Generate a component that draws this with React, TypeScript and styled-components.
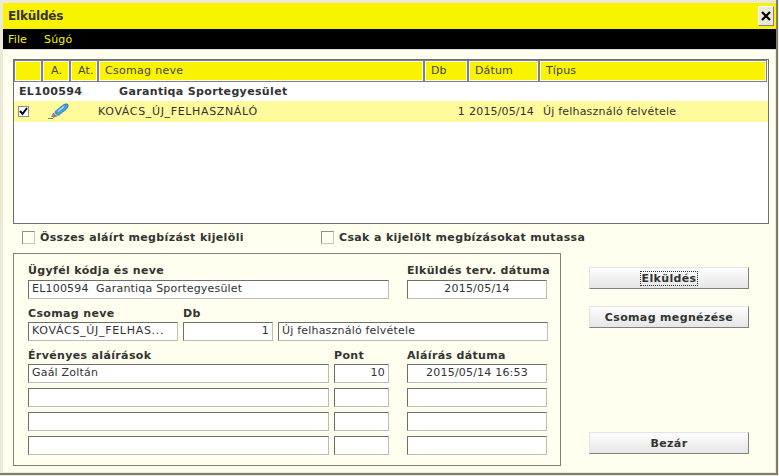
import React from 'react';
import styled, { createGlobalStyle } from 'styled-components';

const GlobalStyle = createGlobalStyle`
	html, body {
		margin: 0;
		padding: 0;
		background: #fffeef;
	}
`;

const Window = styled.div`
	box-sizing: border-box;
	width: 779px;
	height: 476px;
	padding: 3px;
	display: flex;
	flex-direction: column;
	background: #ece9d8;
	box-shadow: inset -1px -1px 0 #ece9d8, inset -3px -3px 0 #7d7d72;
	font-family: 'DejaVu Sans', Verdana, sans-serif;
	font-size: 11px;
	letter-spacing: 0.15px;
	color: #2b2b2b;
`;

const TitleBar = styled.div`
	height: 26px;
	flex: none;
	display: flex;
	align-items: center;
	justify-content: space-between;
	padding: 0 2px 0 5px;
	background: #f9f300;
`;

const Title = styled.span`
	font-size: 12px;
	font-weight: bold;
	letter-spacing: -0.2px;
	color: #333;
`;

const CloseButton = styled.button`
	box-sizing: border-box;
	width: 16px;
	height: 20px;
	padding: 0;
	display: flex;
	align-items: center;
	justify-content: center;
	background: #ece9d8;
	border: 1px solid;
	border-color: #fff #808076 #808076 #fff;
`;

const MenuBar = styled.div`
	height: 20px;
	flex: none;
	display: flex;
	align-items: center;
	gap: 17px;
	padding: 0 5px;
	background: #000;
	color: #f9f300;
	border-bottom: 1px solid #ddd;
`;

const Content = styled.div`
	flex: 1;
	display: flex;
	flex-direction: column;
	padding: 9px 6px 6px 10px;
	background: #fffeef;
	border-right: 1px solid #ece9d8;
	border-bottom: 1px solid #ece9d8;
`;

const ListBox = styled.div`
	box-sizing: border-box;
	height: 165px;
	flex: none;
	background: #fff;
	border: 1px solid #70706c;
`;

const HeaderRow = styled.div`
	display: grid;
	grid-template-columns: 26px 26px 26px 324px 42px 69px 226px;
	gap: 2px;
	padding: 1px 1px 0;
`;

const HeaderCell = styled.div<{ $pad?: number; $spread?: number }>`
	box-sizing: border-box;
	height: 20px;
	line-height: 18px;
	padding-left: ${(p) => p.$pad ?? 5}px;
	letter-spacing: ${(p) => p.$spread ?? 0.15}px;
	background: #f9f300;
	border: 1px solid #fff;
	outline: 1px solid #808080;
	color: #444;
`;

const GroupRow = styled.div`
	height: 20px;
	display: flex;
	align-items: center;
	font-weight: bold;
	letter-spacing: 0.35px;
	color: #333;
`;

const GroupCode = styled.span`
	width: 100px;
	padding-left: 5px;
	flex: none;
`;

const ItemRow = styled.div`
	height: 21px;
	display: flex;
	align-items: center;
	background: #fffa9c;
	color: #333;
`;

const RowCheck = styled.div`
	box-sizing: border-box;
	width: 11px;
	height: 11px;
	margin-left: 4px;
	flex: none;
	display: flex;
	align-items: center;
	justify-content: center;
	background: #fff;
	border: 1px solid #8a8f9c;
`;

const PenSlot = styled.div`
	width: 27px;
	margin-left: 17px;
	flex: none;
	display: flex;
`;

const ItemName = styled.span`
	width: 343px;
	margin-left: 25px;
	flex: none;
	letter-spacing: 0.65px;
`;

const ItemCount = styled.span`
	width: 24px;
	text-align: right;
	flex: none;
`;

const ItemDate = styled.span`
	width: 69px;
	text-align: right;
	flex: none;
`;

const ItemType = styled.span`
	margin-left: 9px;
	letter-spacing: 0.2px;
`;

const OptionsRow = styled.div`
	height: 29px;
	flex: none;
	display: flex;
	align-items: center;
	font-weight: bold;
	letter-spacing: 0.35px;
	color: #333;
	padding: 0 0 2px 9px;
	box-sizing: border-box;
`;

const Option = styled.label<{ $width: number }>`
	display: flex;
	align-items: center;
	gap: 5px;
	width: ${(p) => p.$width}px;
`;

const EmptyBox = styled.span`
	box-sizing: border-box;
	width: 13px;
	height: 13px;
	background: #fffeef;
	border: 1px solid;
	border-color: #8f8f8f #c4c4c4 #c4c4c4 #8f8f8f;
`;

const Lower = styled.div`
	flex: 1;
	display: flex;
	gap: 28px;
`;

const FormPanel = styled.div`
	box-sizing: border-box;
	width: 548px;
	height: 213px;
	padding: 10px 12px 0 14px;
	border: 1px solid #808076;
	display: flex;
	flex-direction: column;
`;

const FormRow = styled.div<{ $cols: string; $gap?: number; $after?: number }>`
	display: grid;
	grid-template-columns: ${(p) => p.$cols};
	column-gap: ${(p) => p.$gap ?? 5}px;
	margin-bottom: ${(p) => p.$after ?? 0}px;
`;

const FieldLabel = styled.div<{ $indent?: number; $low?: boolean }>`
	height: 16px;
	line-height: ${(p) => (p.$low ? 16 : 14)}px;
	margin-left: ${(p) => p.$indent ?? 0}px;
	font-weight: bold;
	letter-spacing: 0.35px;
	color: #333;
	white-space: nowrap;
`;

const Field = styled.div<{ $align?: string; $caps?: boolean; $indent?: number }>`
	box-sizing: border-box;
	height: 19px;
	line-height: 16px;
	padding: 0 3px;
	margin-left: ${(p) => p.$indent ?? 0}px;
	background: #fff;
	border: 1px solid;
	border-color: #6f6f6a #bdbdb8 #bdbdb8 #6f6f6a;
	color: #333;
	letter-spacing: ${(p) => (p.$caps ? 0.7 : 0.2)}px;
	white-space: nowrap;
	overflow: hidden;
	text-align: ${(p) => p.$align ?? 'left'};
`;

const ButtonColumn = styled.div`
	width: 160px;
	height: 187px;
	margin-top: 14px;
	display: flex;
	flex-direction: column;
	gap: 17px;
`;

const ActionButton = styled.button<{ $bottom?: boolean }>`
	box-sizing: border-box;
	height: 22px;
	padding: 0;
	flex: none;
	margin-top: ${(p) => (p.$bottom ? 'auto' : '0')};
	background: linear-gradient(#fdfdfd, #e6e6e6);
	border: 1px solid;
	border-color: #e4e4e4 #808080 #808080 #e4e4e4;
	font-family: inherit;
	font-size: 11px;
	font-weight: bold;
	color: #333;
	letter-spacing: 0.35px;
`;

const FocusText = styled.span`
	padding: 0 1px;
	outline: 1px dotted #333;
`;

const signatureRows = [
	{ name: 'Gaál Zoltán', point: '10', date: '2015/05/14 16:53' },
	{ name: '', point: '', date: '' },
	{ name: '', point: '', date: '' },
	{ name: '', point: '', date: '' },
];

const PenIcon = () => (
	<svg width='24' height='18' viewBox='0 0 24 18'>
		<path d='M2 15.5 L7 15.5 L9 13' stroke='#77786f' strokeWidth='1' fill='none' />
		<path d='M5 14 L7 10 L10 9 L12 12 L10.5 14 Z' fill='#7f8a90' />
		<path d='M9 8.5 L17 2 Q20.5 -0.2 22 1.5 Q23 4 20 6.5 L12.5 12.5 Z' fill='#3f9fe0' stroke='#2a6c9c' strokeWidth='0.6' />
		<path d='M12 8.5 L18 3.5' stroke='#a5dcf8' strokeWidth='1.3' fill='none' />
		<path d='M8 10 L11.5 13' stroke='#c9d6d8' strokeWidth='1' fill='none' />
	</svg>
);

const App: React.FC = () => {
	return (
		<Window>
			<GlobalStyle />
			<TitleBar>
				<Title>Elküldés</Title>
				<CloseButton>
					<svg width='10' height='10' viewBox='0 0 10 10'>
						<path d='M1 1 L9 9 M9 1 L1 9' stroke='#000' strokeWidth='2.2' />
					</svg>
				</CloseButton>
			</TitleBar>
			<MenuBar>
				<span>File</span>
				<span>Súgó</span>
			</MenuBar>
			<Content>
				<ListBox>
					<HeaderRow>
						<HeaderCell />
						<HeaderCell $pad={7}>A.</HeaderCell>
						<HeaderCell $pad={6}>At.</HeaderCell>
						<HeaderCell $spread={0.3}>Csomag neve</HeaderCell>
						<HeaderCell>Db</HeaderCell>
						<HeaderCell>Dátum</HeaderCell>
						<HeaderCell>Típus</HeaderCell>
					</HeaderRow>
					<GroupRow>
						<GroupCode>EL100594</GroupCode>
						<span>Garantiqa Sportegyesület</span>
					</GroupRow>
					<ItemRow>
						<RowCheck>
							<svg width='9' height='9' viewBox='0 0 9 9'>
								<path d='M1 4 L3.5 7 L8 1' stroke='#000' strokeWidth='2' fill='none' />
							</svg>
						</RowCheck>
						<PenSlot>
							<PenIcon />
						</PenSlot>
						<ItemName>KOVÁCS_ÚJ_FELHASZNÁLÓ</ItemName>
						<ItemCount>1</ItemCount>
						<ItemDate>2015/05/14</ItemDate>
						<ItemType>Új felhasználó felvétele</ItemType>
					</ItemRow>
				</ListBox>
				<OptionsRow>
					<Option $width={299}>
						<EmptyBox />
						Összes aláírt megbízást kijelöli
					</Option>
					<Option $width={290}>
						<EmptyBox />
						Csak a kijelölt megbízásokat mutassa
					</Option>
				</OptionsRow>
				<Lower>
					<FormPanel>
						<FormRow $cols='361px 150px' $gap={18}>
							<FieldLabel>Ügyfél kódja és neve</FieldLabel>
							<FieldLabel>Elküldés terv. dátuma</FieldLabel>
						</FormRow>
						<FormRow $cols='361px 140px' $gap={18} $after={7}>
							<Field>EL100594&nbsp; Garantiqa Sportegyesület</Field>
							<Field $align='center'>2015/05/14</Field>
						</FormRow>
						<FormRow $cols='150px 90px 270px'>
							<FieldLabel $low>Csomag neve</FieldLabel>
							<FieldLabel $low>Db</FieldLabel>
						</FormRow>
						<FormRow $cols='150px 90px 270px' $after={7}>
							<Field $caps>KOVÁCS_ÚJ_FELHAS...</Field>
							<Field $align='right'>1</Field>
							<Field>Új felhasználó felvétele</Field>
						</FormRow>
						<FormRow $cols='301px 55px 153px'>
							<FieldLabel $low>Érvényes aláírások</FieldLabel>
							<FieldLabel $low>Pont</FieldLabel>
							<FieldLabel $low $indent={13}>Aláírás dátuma</FieldLabel>
						</FormRow>
						{signatureRows.map((row, index) => (
							<FormRow key={index} $cols='301px 55px 153px' $after={5}>
								<Field>{row.name}</Field>
								<Field $align='right'>{row.point}</Field>
								<Field $align='center' $indent={13}>{row.date}</Field>
							</FormRow>
						))}
					</FormPanel>
					<ButtonColumn>
						<ActionButton>
							<FocusText>Elküldés</FocusText>
						</ActionButton>
						<ActionButton>Csomag megnézése</ActionButton>
						<ActionButton $bottom>Bezár</ActionButton>
					</ButtonColumn>
				</Lower>
			</Content>
		</Window>
	);
};

export default App;
